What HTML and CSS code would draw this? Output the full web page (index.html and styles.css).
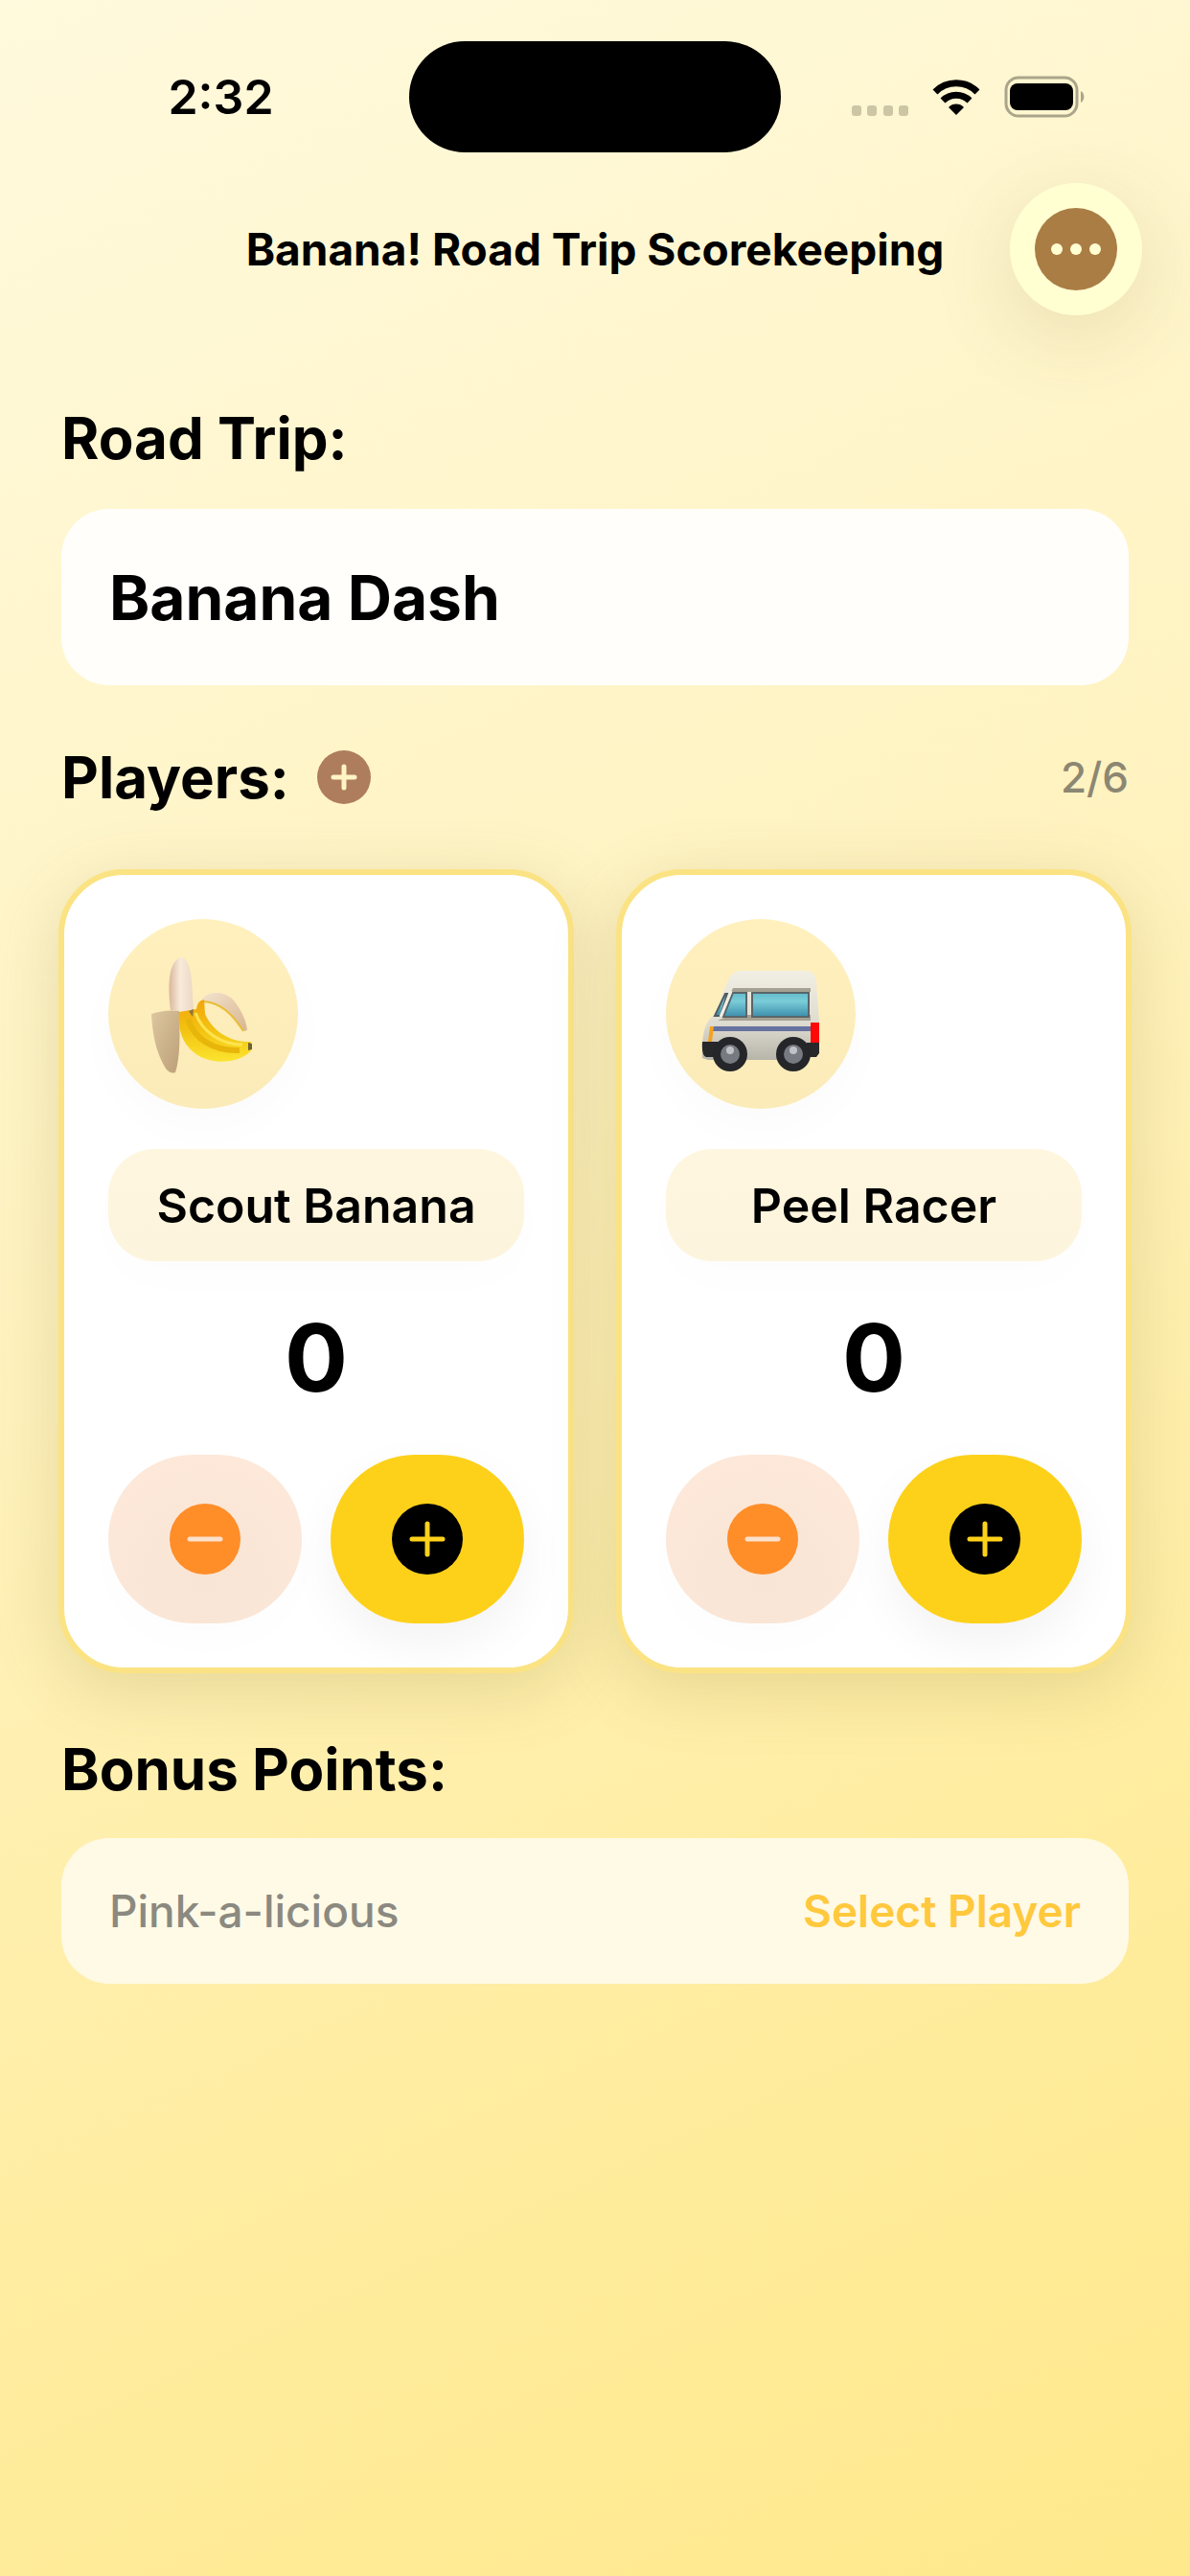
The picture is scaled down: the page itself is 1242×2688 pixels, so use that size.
FILE: index.html
```html
<!DOCTYPE html>
<html lang="en">
	<head>
		<meta charset="utf-8">
		<meta name="viewport" content="width=device-width">
		<title>Banana! Road Trip Scorekeeping</title>
		<link rel="stylesheet" href="styles.css">
	</head>
	<body>

		<div class="statusbar">
			<div class="time">2:32</div>
			<div class="island"></div>
			<div class="status-icons">
				<svg class="signal" viewBox="0 0 60 12">
					<rect x="1" y="1" width="10" height="11" rx="3" />
					<rect x="17" y="1" width="10" height="11" rx="3" />
					<rect x="34" y="1" width="10" height="11" rx="3" />
					<rect x="50" y="1" width="10" height="11" rx="3" />
				</svg>
				<svg class="wifi" viewBox="0 0 52 40">
					<path d="M4 15 A31 31 0 0 1 48 15" />
					<path d="M12 24 A20 20 0 0 1 40 24" />
					<path class="dot" d="M26 39 L18 31 A11 11 0 0 1 34 31 Z" />
				</svg>
				<svg class="battery" viewBox="0 0 86 44">
					<rect class="shell" x="2" y="2" width="74" height="40" rx="13" />
					<rect x="6" y="8" width="66" height="28" rx="8" />
					<path class="nub" d="M80 16 A7 7 0 0 1 80 28 Z" />
				</svg>
			</div>
		</div>

		<header class="navbar">
			<h1>Banana! Road Trip Scorekeeping</h1>
			<button class="more" type="button" aria-label="Menu">
				<svg viewBox="0 0 88 88">
					<circle cx="44" cy="44" r="43" />
					<g class="dots">
						<circle cx="24" cy="44" r="6" />
						<circle cx="44" cy="44" r="6" />
						<circle cx="64" cy="44" r="6" />
					</g>
				</svg>
			</button>
		</header>

		<main>
			<label class="heading" for="trip">Road Trip:</label>
			<input class="trip" id="trip" type="text" value="Banana Dash">

			<div class="players-head">
				<h2 class="heading">Players:</h2>
				<button class="add" type="button" aria-label="Add player">
					<svg viewBox="0 0 58 58">
						<circle cx="29" cy="29" r="28" />
						<path d="M29 18 V40 M18 29 H40" />
					</svg>
				</button>
				<span class="count">2/6</span>
			</div>

			<section class="players">
				<div class="card">
					<div class="avatar">
						<svg viewBox="0 0 198 198">
							<defs>
								<linearGradient id="flesh" x1="0" y1="0" x2="1" y2="0">
									<stop offset="0" stop-color="#d9b79c" />
									<stop offset="0.45" stop-color="#f8ead9" />
									<stop offset="1" stop-color="#ecd8c6" />
								</linearGradient>
								<linearGradient id="rind" x1="0" y1="0" x2="1" y2="1">
									<stop offset="0" stop-color="#f3e2cd" />
									<stop offset="1" stop-color="#d8b690" />
								</linearGradient>
								<linearGradient id="flap" x1="0" y1="0" x2="1" y2="1">
									<stop offset="0" stop-color="#dcc7a0" />
									<stop offset="1" stop-color="#bd9f78" />
								</linearGradient>
								<linearGradient id="peel" x1="0" y1="0" x2="0" y2="1">
									<stop offset="0" stop-color="#f2a50c" />
									<stop offset="0.5" stop-color="#f3c312" />
									<stop offset="1" stop-color="#fbe42f" />
								</linearGradient>
							</defs>
							<path fill="url(#flesh)" d="M65 95 C62 72 62 44 76 40 C88 41 87 70 89 94 L84 97 Z" />
							<path fill="url(#flap)" d="M45 99 Q60 94 74 96 C75 120 75 145 70 160 Q65 162 60 156 C50 140 46 120 45 99 Z" />
							<path fill="url(#rind)" d="M98 83 C108 73 124 77 131 85 C139 95 144 106 145 116 L141 117 C130 100 118 88 99 86 Z" />
							<path fill="none" stroke="#e9bd35" stroke-width="2" d="M99 86 C118 87 130 100 141 117" />
							<path fill="url(#peel)" d="M74 97 L92 94 Q93 85 100 84 L101 99 C108 115 125 129 149 128 L150 136 C140 149 116 152 99 145 C80 136 72 119 74 97 Z" />
							<path fill="none" stroke="#e8b50a" stroke-width="6" d="M83 104 C90 126 111 138 137 137" />
							<path fill="none" stroke="#ffe350" stroke-width="3" d="M91 98 C98 118 118 131 140 131" />
							<path fill="#706333" d="M146 129 L150 130 L150 136 L146 137 Z" />
							<path fill="#8a7838" d="M84 96 L89 94 L88 102 Z" />
						</svg>
					</div>
					<input class="name" type="text" value="Scout Banana" aria-label="Player name">
					<div class="score">0</div>
					<div class="buttons">
						<button class="minus" type="button" aria-label="Remove point">
							<svg viewBox="0 0 76 76">
								<circle cx="38" cy="38" r="37" />
								<path d="M22 38 H54" />
							</svg>
						</button>
						<button class="plus" type="button" aria-label="Add point">
							<svg viewBox="0 0 76 76">
								<circle cx="38" cy="38" r="37" />
								<path d="M38 22 V54 M22 38 H54" />
							</svg>
						</button>
					</div>
				</div>

				<div class="card">
					<div class="avatar">
						<svg viewBox="0 0 198 198">
							<defs>
								<linearGradient id="body" x1="0" y1="0" x2="0" y2="1">
									<stop offset="0" stop-color="#f1efe4" />
									<stop offset="0.6" stop-color="#dedbd0" />
									<stop offset="1" stop-color="#b7b4aa" />
								</linearGradient>
								<linearGradient id="glass" x1="0" y1="0" x2="0" y2="1">
									<stop offset="0" stop-color="#62bccb" />
									<stop offset="0.35" stop-color="#7accd8" />
									<stop offset="1" stop-color="#3c8fac" />
								</linearGradient>
							</defs>
							<path fill="url(#body)" d="M38 145 C37 120 41 106 51 100 L64 66 Q68 55 78 54 H146 Q156 54 157 66 L160 108 V140 L140 147 H44 Z" />
							<path fill="#a5a193" d="M70 72 H151 V76 H68 Z M68 100 H151 V106 H54 Z" />
							<path fill="#6672a0" d="M49 112 H151 V117 H47 Z" />
							<path fill="url(#glass)" stroke="#4e5b60" stroke-width="2" d="M62 78 L51 101 H57 L64 78 Z" />
							<path fill="url(#glass)" stroke="#596569" stroke-width="2" d="M70 77 H84 V102 H60 Z" />
							<path fill="url(#glass)" stroke="#596569" stroke-width="2" d="M90 77 H149 V102 H90 Z" />
							<path stroke="#f1eee3" stroke-width="3" d="M68 75 L57 102" />
							<path fill="#f5a21d" d="M46 112 L50 112 L48 128 L44 128 Z" />
							<path fill="#fe0808" d="M151 108 H160 V130 H151 Z" />
							<path fill="#26282a" d="M38 128 H54 V144 H42 Q37 143 38 128 Z M147 129 H160 V140 L157 144 H147 Z" />
							<circle cx="67" cy="141" r="18" fill="#242629" />
							<circle cx="67" cy="141" r="10" fill="#777b81" />
							<circle cx="67" cy="137" r="4" fill="#bfc2c7" />
							<circle cx="133" cy="141" r="18" fill="#242629" />
							<circle cx="133" cy="141" r="10" fill="#777b81" />
							<circle cx="133" cy="137" r="4" fill="#bfc2c7" />
						</svg>
					</div>
					<input class="name" type="text" value="Peel Racer" aria-label="Player name">
					<div class="score">0</div>
					<div class="buttons">
						<button class="minus" type="button" aria-label="Remove point">
							<svg viewBox="0 0 76 76">
								<circle cx="38" cy="38" r="37" />
								<path d="M22 38 H54" />
							</svg>
						</button>
						<button class="plus" type="button" aria-label="Add point">
							<svg viewBox="0 0 76 76">
								<circle cx="38" cy="38" r="37" />
								<path d="M38 22 V54 M22 38 H54" />
							</svg>
						</button>
					</div>
				</div>
			</section>

			<h2 class="heading">Bonus Points:</h2>
			<div class="bonus">
				<span class="bonus-name">Pink-a-licious</span>
				<button class="select" type="button">Select Player</button>
			</div>
		</main>

	</body>
</html>
```
FILE: styles.css
```css
* {
	box-sizing: border-box;
}

html {
	min-height: 100%;
	background: linear-gradient(155deg, #fffadd 0%, #fff3c2 40%, #ffec9c 78%, #ffe98c 100%);
}

body {
	margin: 0;
	color: #000;
	font-family: Inter, "Liberation Sans", sans-serif;
	font-size: 46px;
	line-height: 56px;
}

button, input {
	margin: 0;
	padding: 0;
	border: 0;
	color: inherit;
	background: none;
	font: inherit;
}

svg {
	display: block;
}

/* Status bar */
.statusbar {
	display: grid;
	grid-template-columns: 1fr 388px 1fr;
	align-items: center;
	padding-top: 43px;
}

.time {
	padding-left: 34px;
	font-size: 50px;
	font-weight: 600;
	text-align: center;
}

.island {
	height: 116px;
	border-radius: 58px;
	background: #000;
}

.status-icons {
	display: flex;
	align-items: center;
	justify-content: flex-end;
	gap: 24px;
	padding-right: 108px;
}

.signal {
	width: 60px;
	height: 12px;
	margin-top: 28px;
	fill: #cdc6a5;
}

.wifi {
	width: 52px;
	height: 40px;
	fill: none;
	stroke: #000;
	stroke-width: 7;
}

.wifi .dot {
	fill: #000;
	stroke: none;
}

.battery {
	width: 86px;
	height: 44px;
}

.battery .shell {
	fill: none;
	stroke: #aaa58a;
	stroke-width: 3;
}

.battery .nub {
	fill: #aaa58a;
}

/* Title */
.navbar {
	display: grid;
	grid-template-columns: 1fr auto 1fr;
	align-items: center;
	padding: 32px 50px 0;
}

.navbar h1 {
	grid-column: 2;
	margin: 0;
	font-size: 46px;
	font-weight: 700;
}

.more {
	display: grid;
	place-items: center;
	justify-self: end;
	width: 138px;
	height: 138px;
	border-radius: 50%;
	background: #ffffd2;
	box-shadow: 0 20px 90px rgba(90, 80, 0, 0.14);
}

.more svg {
	width: 88px;
	height: 88px;
	fill: #aa7d45;
}

.more .dots {
	fill: #ffffd2;
}

/* Content */
main {
	padding: 88px 64px;
}

.heading {
	display: block;
	margin: 0;
	font-size: 60px;
	font-weight: 700;
	line-height: 80px;
}

.trip {
	display: block;
	width: 100%;
	height: 184px;
	margin: 34px 0 56px;
	padding: 0 50px;
	border-radius: 50px;
	background: #fffefb;
	font-size: 64px;
	font-weight: 700;
}

.players-head {
	display: flex;
	align-items: center;
}

.add {
	margin-left: 28px;
}

.add svg {
	width: 58px;
	height: 58px;
	fill: #ae7d5d;
	stroke: #fff4c4;
	stroke-width: 5;
	stroke-linecap: round;
}

.add circle {
	stroke: none;
}

.count {
	margin-left: auto;
	color: #8c8772;
	font-size: 44px;
	font-weight: 500;
}

.players {
	display: grid;
	grid-template-columns: 1fr 1fr;
	gap: 44px;
	margin: 56px -3px 60px;
}

.card {
	padding: 46px;
	border: 6px solid #fbe384;
	border-radius: 68px;
	background: #fff;
	box-shadow: 0 16px 70px rgba(110, 100, 30, 0.18);
}

.avatar {
	width: 198px;
	height: 198px;
	border-radius: 50%;
	background: linear-gradient(#fff0bd, #faebb8);
	box-shadow: 0 20px 50px rgba(0, 0, 0, 0.02);
}

.name {
	display: block;
	width: 100%;
	height: 117px;
	margin-top: 42px;
	border-radius: 48px;
	background: linear-gradient(#fff6df, #fcf4dc);
	box-shadow: 0 20px 50px rgba(0, 0, 0, 0.01);
	font-size: 50px;
	font-weight: 600;
	text-align: center;
}

.score {
	margin: 41px 0;
	font-size: 98px;
	font-weight: 700;
	line-height: 120px;
	text-align: center;
}

.buttons {
	display: grid;
	grid-template-columns: 1fr 1fr;
	gap: 30px;
}

.minus, .plus {
	display: grid;
	place-items: center;
	height: 176px;
	border-radius: 88px;
}

.minus {
	background: radial-gradient(circle at 50% 75%, #f8e5d5, #fde8d9 80%);
	box-shadow: 0 20px 50px rgba(0, 0, 0, 0.01);
}

.plus {
	background: #fdd11a;
	box-shadow: 0 20px 50px rgba(0, 0, 30, 0.05);
}

.minus svg, .plus svg {
	width: 76px;
	height: 76px;
	stroke-width: 5;
	stroke-linecap: round;
}

.minus circle, .plus circle {
	stroke: none;
}

.minus svg {
	fill: #ff8d28;
	stroke: #fbe0cb;
}

.plus svg {
	fill: #000;
	stroke: #fdd11a;
}

.bonus {
	display: flex;
	align-items: center;
	justify-content: space-between;
	height: 152px;
	margin-top: 32px;
	padding: 0 50px;
	border-radius: 50px;
	background: #fffae6;
}

.bonus-name {
	color: #8b8980;
	font-weight: 500;
}

.select {
	color: #ffc83d;
	font-weight: 600;
}
```
